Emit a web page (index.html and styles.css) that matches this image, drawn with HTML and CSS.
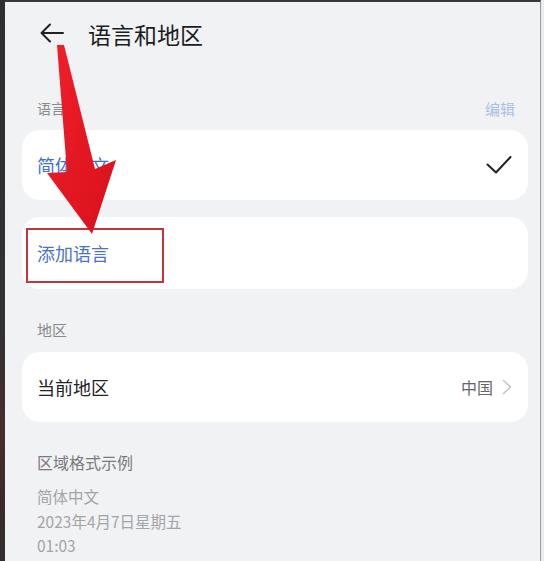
FILE: index.html
```html
<!DOCTYPE html>
<html lang="zh-CN">
<head>
<meta charset="utf-8">
<title>语言和地区</title>
<link rel="stylesheet" href="styles.css">
</head>
<body>
<div class="edge"></div>
<div class="screen">
  <header class="header">
    <svg class="back" width="24" height="20" viewBox="0 0 24 20"><path d="M23 10H2M10 1.5L1.5 10L10 18.5" fill="none" stroke="#222" stroke-width="2" stroke-linecap="round" stroke-linejoin="round"/></svg>
    <h1 class="title">语言和地区</h1>
  </header>

  <div class="section-head">
    <span class="label">语言</span>
    <span class="edit">编辑</span>
  </div>
  <div class="card card-lang">
    <span class="link">简体中文</span>
    <svg class="check" width="26" height="20" viewBox="0 0 26 20"><path d="M1.5 9.5L10 17.5L24.5 2" fill="none" stroke="#222" stroke-width="2" stroke-linecap="round" stroke-linejoin="round"/></svg>
  </div>
  <div class="card card-add">
    <span class="link add">添加语言</span>
    <span class="mark"></span>
  </div>

  <div class="section-head region-head">
    <span class="label">地区</span>
  </div>
  <div class="card card-region">
    <span class="item">当前地区</span>
    <span class="value">中国<svg class="chev" width="10" height="16" viewBox="0 0 10 16"><path d="M1.5 1.5L8.5 8L1.5 14.5" fill="none" stroke="#c4c4c4" stroke-width="1.6" stroke-linecap="round" stroke-linejoin="round"/></svg></span>
  </div>

  <div class="format-head">区域格式示例</div>
  <div class="format">
    <div>简体中文</div>
    <div>2023年4月7日星期五</div>
    <div>01:03</div>
  </div>

  <svg class="pointer" width="130" height="250" viewBox="0 0 130 250">
    <defs>
      <linearGradient id="rg" x1="0" y1="0" x2="1" y2="1">
        <stop offset="0" stop-color="#f0202a"/>
        <stop offset="1" stop-color="#d8101c"/>
      </linearGradient>
    </defs>
    <polygon points="57,45 64,45 95,169 116,160 92,234 47,173 67,172" fill="url(#rg)"/>
  </svg>
</div>
<div class="rim"></div>
</body>
</html>
```
FILE: styles.css
```css
html, body {
  margin: 0;
  padding: 0;
  height: 100%;
}
body {
  display: flex;
  background: #f1f2f4;
  font-family: "Noto Sans CJK SC", "Noto Sans", sans-serif;
  overflow: hidden;
}
.edge {
  width: 5px;
  flex: none;
  background: linear-gradient(180deg, #2f2f31 0%, #323234 60%, #4b2c2c 78%, #3a2a2a 90%, #303032 100%);
}
.rim {
  width: 3px;
  flex: none;
  background: #ebecee;
}
.screen {
  flex: 1;
  position: relative;
  border-top: 2px solid #3a3a3c;
  border-right: 1px solid #9a9a9c;
  background: #f1f2f4;
}
.header {
  height: 64px;
  display: flex;
  align-items: center;
  padding-left: 35px;
}
.back {
  display: block;
  margin-top: -2px;
}
.title {
  margin: 0 0 0 24px;
  font-size: 23px;
  font-weight: 400;
  color: #1c1c1e;
  line-height: 30px;
}
.section-head {
  display: flex;
  justify-content: space-between;
  align-items: center;
  margin-top: 32px;
  padding: 0 25px 0 32px;
  height: 20px;
}
.label {
  font-size: 14px;
  color: #8a8a8c;
}
.edit {
  font-size: 15px;
  color: #a9bfe9;
}
.card {
  position: relative;
  margin: 0 12px 0 17px;
  background: #ffffff;
  border-radius: 18px;
  display: flex;
  align-items: center;
  justify-content: space-between;
  padding: 0 16px 0 15px;
}
.card-lang {
  margin-top: 12px;
  height: 70px;
}
.card-add {
  margin-top: 17px;
  height: 72px;
}
.link {
  font-size: 18px;
  color: #3f6fcc;
}
.add {
  color: #4a73c6;
}
.check {
  display: block;
}
.mark {
  position: absolute;
  left: 4px;
  top: 11px;
  width: 134px;
  height: 51px;
  border: 2px solid #c4333c;
}
.region-head {
  margin-top: 30px;
}
.region-head .label {
  font-size: 15px;
}
.card-region {
  margin-top: 13px;
  height: 70px;
}
.item {
  font-size: 18px;
  color: #222224;
}
.value {
  display: flex;
  align-items: center;
  gap: 9px;
  font-size: 16px;
  color: #666668;
}
.format-head {
  margin-top: 29px;
  padding-left: 32px;
  font-size: 16px;
  line-height: 22px;
  color: #7a7a7c;
}
.format {
  margin-top: 11px;
  padding-left: 32px;
  font-size: 15.5px;
  line-height: 24.5px;
  color: #a4a4a6;
}
.pointer {
  position: absolute;
  left: -5px;
  top: -2px;
}
```
